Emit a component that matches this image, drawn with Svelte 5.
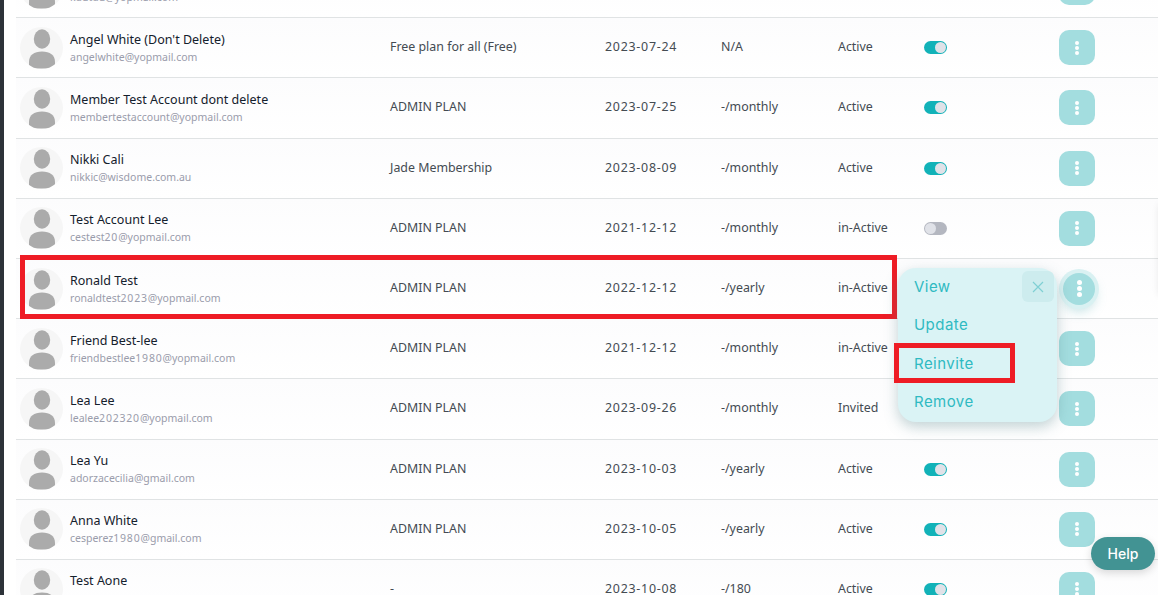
<script>
  const rows = [
    { name: '', email: 'kdutdu@yopmail.com', plan: '', date: '', price: '', status: '', toggle: '' },
    { name: "Angel White (Don't Delete)", email: 'angelwhite@yopmail.com', plan: 'Free plan for all (Free)', date: '2023-07-24', price: 'N/A', status: 'Active', toggle: 'on' },
    { name: 'Member Test Account dont delete', email: 'membertestaccount@yopmail.com', plan: 'ADMIN PLAN', date: '2023-07-25', price: '-/monthly', status: 'Active', toggle: 'on' },
    { name: 'Nikki Cali', email: 'nikkic@wisdome.com.au', plan: 'Jade Membership', date: '2023-08-09', price: '-/monthly', status: 'Active', toggle: 'on' },
    { name: 'Test Account Lee', email: 'cestest20@yopmail.com', plan: 'ADMIN PLAN', date: '2021-12-12', price: '-/monthly', status: 'in-Active', toggle: 'off' },
    { name: 'Ronald Test', email: 'ronaldtest2023@yopmail.com', plan: 'ADMIN PLAN', date: '2022-12-12', price: '-/yearly', status: 'in-Active', toggle: '', open: true },
    { name: 'Friend Best-lee', email: 'friendbestlee1980@yopmail.com', plan: 'ADMIN PLAN', date: '2021-12-12', price: '-/monthly', status: 'in-Active', toggle: '' },
    { name: 'Lea Lee', email: 'lealee202320@yopmail.com', plan: 'ADMIN PLAN', date: '2023-09-26', price: '-/monthly', status: 'Invited', toggle: '' },
    { name: 'Lea Yu', email: 'adorzacecilia@gmail.com', plan: 'ADMIN PLAN', date: '2023-10-03', price: '-/yearly', status: 'Active', toggle: 'on' },
    { name: 'Anna White', email: 'cesperez1980@gmail.com', plan: 'ADMIN PLAN', date: '2023-10-05', price: '-/yearly', status: 'Active', toggle: 'on' },
    { name: 'Test Aone', email: '', plan: '-', date: '2023-10-08', price: '-/180', status: 'Active', toggle: 'on' }
  ];

  // digits in the emails run wider than the fallback font, so they get their own span
  const pieces = (text) => text.split(/(\d+)/);
</script>

<div class="page">
  <div class="list">
    {#each rows as row}
      <div class="row">
        <div class="user">
          <div class="avatar">
            <svg width="28" height="40" viewBox="0 0 28 40">
              <ellipse cx="14" cy="10" rx="8.2" ry="9.7" fill="#ababab" />
              <path d="M1 33 C1 26 6 22.5 14 22.5 C22 22.5 27 26 27 33 L27 36 C27 38.5 25.5 39.5 23.5 39.5 L4.5 39.5 C2.5 39.5 1 38.5 1 36 Z" fill="#ababab" />
            </svg>
          </div>
          <div class="who">
            <div class="name">{row.name}</div>
            <div class="email">
              {#each pieces(row.email) as piece, i}
                {#if i % 2}<span class="digits">{piece}</span>{:else}{piece}{/if}
              {/each}
            </div>
          </div>
        </div>
        <div class="cell text">{row.plan}</div>
        <div class="cell text date">{row.date}</div>
        <div class="cell text">{row.price}</div>
        <div class="cell text">{row.status}</div>
        <div class="cell">
          {#if row.toggle}
            <span class="toggle {row.toggle}"><span class="knob"></span></span>
          {/if}
        </div>
        <div class="cell">
          <button class="more" class:open={row.open} aria-label="More">
            <span></span><span></span><span></span>
          </button>
        </div>
      </div>
    {/each}
  </div>

  <div class="mark mark-row"></div>

  <div class="menu">
    <div class="close">
      <svg width="12" height="12" viewBox="0 0 12 12">
        <path d="M1 1 L11 11 M11 1 L1 11" stroke="#7fd0d3" stroke-width="1.2" fill="none" />
      </svg>
    </div>
    <div class="item">View</div>
    <div class="item">Update</div>
    <div class="item">Reinvite</div>
    <div class="item">Remove</div>
  </div>

  <div class="mark mark-item"></div>

  <div class="edge"></div>

  <button class="help">Help</button>
</div>

<style>
  :global(body) {
    background: #fff;
  }

  .page {
    position: relative;
    width: 1158px;
    height: 595px;
    overflow: hidden;
    background: #fff;
    font-family: "Noto Sans", "Open Sans", sans-serif;
    border-left: 4px solid #2d3239;
    box-sizing: border-box;
  }

  .list {
    margin: -42px 0 0 12px;
  }

  .row {
    display: grid;
    grid-template-columns: 374px 215px 116px 117px 86px 135px 1fr;
    align-items: center;
    height: 60.2px;
    box-sizing: border-box;
    border-bottom: 1px solid #e0e3e4;
    background: linear-gradient(#fcfcfd, #fff);
  }

  .user {
    display: flex;
    align-items: center;
    gap: 7px;
    padding-left: 4px;
  }

  .avatar {
    width: 43px;
    height: 42px;
    border-radius: 50%;
    background: #f6f6f6;
    display: flex;
    justify-content: center;
    align-items: flex-end;
    flex: none;
    overflow: hidden;
  }

  .name {
    font-size: 12.5px;
    line-height: 17px;
    height: 17px;
    color: #14202c;
  }

  .email {
    font-size: 10.5px;
    line-height: 15px;
    height: 15px;
    margin-top: 2px;
    color: #9a9cab;
  }

  .digits {
    letter-spacing: 0.8px;
  }

  .cell {
    font-size: 12.4px;
    color: #444b52;
    display: flex;
    align-items: center;
  }

  .text {
    padding-bottom: 2px;
  }

  .date {
    letter-spacing: 0.75px;
  }

  .toggle {
    width: 23px;
    height: 13px;
    border-radius: 7px;
    display: block;
    position: relative;
  }

  .toggle.on {
    background: #12b2b8;
  }

  .toggle.off {
    background: #b4b7c0;
  }

  .knob {
    position: absolute;
    top: 1px;
    width: 11px;
    height: 11px;
    border-radius: 50%;
    background: #e0e2e8;
  }

  .on .knob {
    right: 1px;
  }

  .off .knob {
    left: 1px;
  }

  .more {
    width: 36px;
    height: 35px;
    padding: 0;
    border: none;
    border-radius: 10px;
    background: #a3dddf;
    display: flex;
    flex-direction: column;
    align-items: center;
    justify-content: center;
    gap: 1px;
  }

  .more span {
    width: 4px;
    height: 4px;
    border-radius: 50%;
    background: #fff;
  }

  .more.open {
    width: 32px;
    height: 32px;
    margin-left: 4px;
    border-radius: 50%;
    box-shadow: 0 0 0 4px #d9f1f2, 0 6px 12px rgba(100, 180, 185, 0.4);
  }

  .more.open span {
    width: 5px;
    height: 5px;
  }

  .menu {
    position: absolute;
    left: 894px;
    top: 268px;
    width: 159px;
    height: 154px;
    box-sizing: border-box;
    padding: 8px 16px;
    border-radius: 18px;
    background: #daf3f5;
    box-shadow: 0 5px 14px rgba(80, 130, 135, 0.35);
    font-family: "Inter", sans-serif;
  }

  .item {
    height: 38.4px;
    line-height: 21px;
    font-size: 15px;
    color: #2fbac2;
    letter-spacing: 0.45px;
  }

  .close {
    position: absolute;
    right: 3px;
    top: 3px;
    width: 32px;
    height: 31px;
    border-radius: 6px;
    background: #cdecee;
    display: flex;
    align-items: center;
    justify-content: center;
  }

  .mark {
    position: absolute;
    border: 5px solid #ee1c25;
    box-sizing: border-box;
    pointer-events: none;
  }

  .mark-row {
    left: 16px;
    top: 255px;
    width: 877px;
    height: 64px;
  }

  .mark-item {
    left: 890px;
    top: 343px;
    width: 121px;
    height: 40px;
  }

  /* shadow of something just off the right side of the page */
  .edge {
    position: absolute;
    left: 1156px;
    top: 205px;
    width: 10px;
    height: 90px;
    box-shadow: 0 0 8px rgba(0, 0, 0, 0.12);
  }

  .help {
    position: absolute;
    left: 1087px;
    top: 537px;
    width: 64px;
    height: 33px;
    padding: 0;
    border: none;
    border-radius: 17px;
    background: #429393;
    color: #fff;
    font-family: "Inter", sans-serif;
    font-size: 14px;
    font-weight: 500;
    box-shadow: 0 3px 8px rgba(0, 0, 0, 0.15);
  }
</style>
